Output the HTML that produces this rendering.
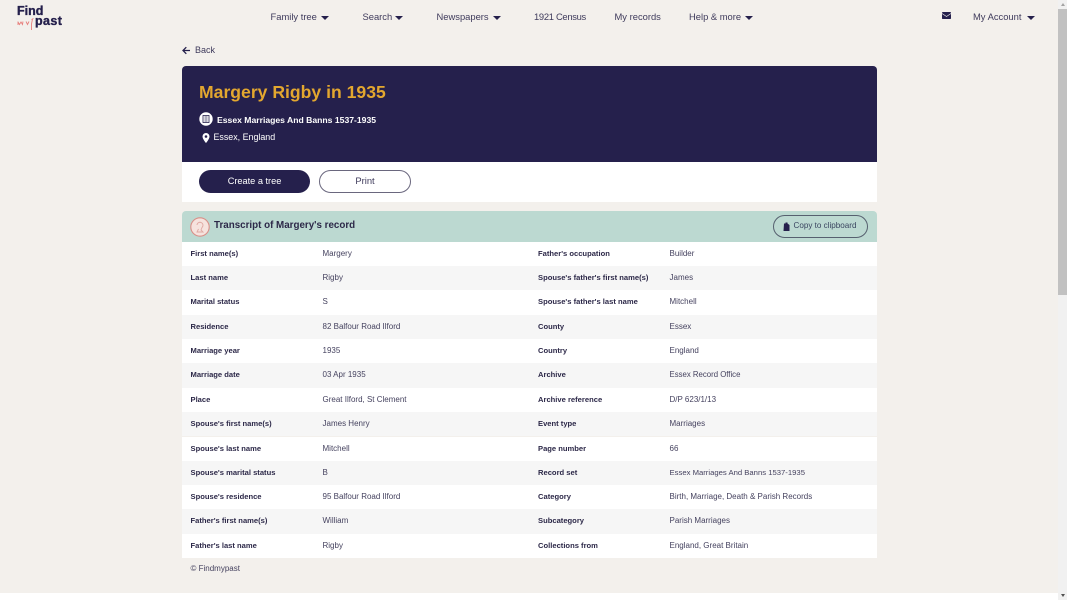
<!DOCTYPE html>
<html><head><meta charset="utf-8"><style>
html,body{margin:0;padding:0;width:1067px;height:600px;overflow:hidden;background:#f3f0ec;font-family:"Liberation Sans",sans-serif;color:#25204c}
.a{position:absolute;white-space:nowrap}
.nav{top:11px;font-size:9.4px;line-height:12px;color:#3f3b5c}
.car{position:absolute;width:0;height:0;border-left:4px solid transparent;border-right:4px solid transparent;border-top:4px solid #25204c}
.row{position:absolute;left:182px;width:695px;height:24.4px}
.row span{position:absolute;top:6px;line-height:11px;white-space:nowrap}
.k{font-size:7.6px;font-weight:bold;color:#2c2848}
.v{font-size:8px;color:#45425f}
.k1{left:8.5px}.v1{left:140.5px}.k2{left:356px}.v2{left:487.5px}
</style></head><body>
<div class="a" style="left:17px;top:5px;font-size:12.5px;line-height:12px;font-weight:bold;color:#25204c;-webkit-text-stroke:.35px #25204c">Find</div>
<div class="a" style="left:35px;top:15px;font-size:12.5px;line-height:12px;font-weight:bold;color:#25204c;letter-spacing:.4px;-webkit-text-stroke:.35px #25204c">past</div>
<svg class="a" style="left:17px;top:18px" width="18" height="13" fill="none" stroke="#e77f7c" stroke-width=".9"><path d="M1 3.500v3.500M1 4l1.500 2.500L4 4l1.500 2.500L6 3.500M9 3.500l1.500 3 1.500-3M14.500 1.500l2-1M15.500 1L14.500 6v6"/></svg>

<div class="a nav" style="left:270.500px">Family tree</div><div class="car" style="left:321px;top:16px"></div>
<div class="a nav" style="left:362.500px">Search</div><div class="car" style="left:395px;top:16px"></div>
<div class="a nav" style="left:436.500px">Newspapers</div><div class="car" style="left:493px;top:16px"></div>
<div class="a nav" style="left:534px;letter-spacing:-.3px">1921 Census</div>
<div class="a nav" style="left:614.500px">My records</div>
<div class="a nav" style="left:689px">Help &amp; more</div><div class="car" style="left:745px;top:16px"></div>
<svg class="a" style="left:942px;top:12px" width="9" height="7"><rect width="9" height="7" rx=".8" fill="#25204c"/><path d="M0 1.500L4.500 4.500L9 1.500" fill="none" stroke="#f3f0ec" stroke-width=".7"/></svg>
<div class="a nav" style="left:973px">My Account</div><div class="car" style="left:1027px;top:16px"></div>

<svg class="a" style="left:182px;top:46px" width="9" height="9" fill="none" stroke="#25204c" stroke-width="1.300"><path d="M8 4.500H1M4.300 1.200L1 4.500l3.300 3.300"/></svg>
<div class="a" style="left:195px;top:44px;font-size:9px;line-height:12px;color:#3f3b5c">Back</div>

<div class="a" style="left:182px;top:66px;width:695px;height:96px;background:#25204c;border-radius:4px 4px 0 0"></div>
<div class="a" style="left:199px;top:81px;font-size:17.600px;line-height:22px;font-weight:bold;color:#e3a72f">Margery Rigby in 1935</div>
<svg class="a" style="left:199px;top:112px" width="14" height="14"><circle cx="7" cy="7" r="6.700" fill="#fff"/><rect x="4" y="3.500" width="6" height="7" fill="none" stroke="#25204c" stroke-width=".8"/><path d="M5.500 5h3M5.500 7h3M5.500 9h3" stroke="#25204c" stroke-width=".7"/></svg>
<div class="a" style="left:217px;top:113.500px;font-size:8.620px;line-height:12px;font-weight:bold;color:#fff">Essex Marriages And Banns 1537-1935</div>
<svg class="a" style="left:202px;top:133px" width="8" height="10"><path fill-rule="evenodd" d="M4 0a3.500 3.500 0 0 1 3.500 3.500C7.500 6 4 10 4 10S.5 6 .5 3.500A3.500 3.500 0 0 1 4 0zm0 2.200a1.300 1.300 0 1 0 0 2.600 1.300 1.300 0 0 0 0-2.600z" fill="#fff"/></svg>
<div class="a" style="left:213.500px;top:131px;font-size:8.900px;line-height:12px;color:#fff">Essex, England</div>

<div class="a" style="left:182px;top:162px;width:695px;height:40px;background:#fff"></div>
<div class="a" style="left:199px;top:170px;width:111px;height:23px;border-radius:12px;background:#25204c;color:#fff;font-size:9.200px;line-height:23px;text-align:center">Create a tree</div>
<div class="a" style="left:319px;top:170px;width:90px;height:21px;border-radius:12px;border:1px solid #6a677e;background:#fff;color:#3f3b5c;font-size:9.400px;line-height:20px;text-align:center">Print</div>

<div class="a" style="left:182px;top:211px;width:695px;height:31px;background:#bcd9d1;border-radius:4px 4px 0 0"></div>
<svg class="a" style="left:190px;top:217px" width="20" height="20" fill="none"><circle cx="10" cy="10" r="9.200" fill="#f6e3de" stroke="#d98f88" stroke-width="1.100"/><path d="M7 8a3 3 0 1 1 5 2.500L11 13l2 2H7l1.500-3" stroke="#dfa8a2" stroke-width=".9"/></svg>
<div class="a" style="left:214px;top:219px;font-size:9.800px;line-height:14px;font-weight:bold;color:#2c2848">Transcript of Margery's record</div>
<div class="a" style="left:773px;top:215px;width:93px;height:21px;border:1px solid #56606f;border-radius:12px"></div>
<svg class="a" style="left:783px;top:222px" width="7" height="9"><path d="M1 1.500h1.500V.5h2v1L6.500 3v6H.5z" fill="#25204c"/></svg>
<div class="a" style="left:793.500px;top:219.500px;font-size:8.100px;line-height:11px;color:#3a4560">Copy to clipboard</div>

<div class="row" style="top:241.500px;background:#fff"><span class="k k1">First name(s)</span><span class="v v1">Margery</span><span class="k k2">Father's occupation</span><span class="v v2">Builder</span></div>
<div class="row" style="top:265.900px;background:#f6f6f6"><span class="k k1">Last name</span><span class="v v1">Rigby</span><span class="k k2">Spouse's father's first name(s)</span><span class="v v2">James</span></div>
<div class="row" style="top:290.200px;background:#fff"><span class="k k1">Marital status</span><span class="v v1">S</span><span class="k k2">Spouse's father's last name</span><span class="v v2">Mitchell</span></div>
<div class="row" style="top:314.600px;background:#f6f6f6"><span class="k k1">Residence</span><span class="v v1">82 Balfour Road Ilford</span><span class="k k2">County</span><span class="v v2">Essex</span></div>
<div class="row" style="top:338.900px;background:#fff"><span class="k k1">Marriage year</span><span class="v v1">1935</span><span class="k k2">Country</span><span class="v v2">England</span></div>
<div class="row" style="top:363.300px;background:#f6f6f6"><span class="k k1">Marriage date</span><span class="v v1">03 Apr 1935</span><span class="k k2">Archive</span><span class="v v2" style="font-size:7.800px">Essex Record Office</span></div>
<div class="row" style="top:387.600px;background:#fff"><span class="k k1">Place</span><span class="v v1">Great Ilford, St Clement</span><span class="k k2">Archive reference</span><span class="v v2">D/P 623/1/13</span></div>
<div class="row" style="top:412px;background:#f6f6f6"><span class="k k1">Spouse's first name(s)</span><span class="v v1">James Henry</span><span class="k k2">Event type</span><span class="v v2">Marriages</span></div>
<div class="row" style="top:436.600px;background:#fff"><span class="k k1">Spouse's last name</span><span class="v v1">Mitchell</span><span class="k k2">Page number</span><span class="v v2">66</span></div>
<div class="row" style="top:460.700px;background:#f6f6f6"><span class="k k1">Spouse's marital status</span><span class="v v1">B</span><span class="k k2">Record set</span><span class="v v2" style="font-size:7.700px">Essex Marriages And Banns 1537-1935</span></div>
<div class="row" style="top:485px;background:#fff"><span class="k k1">Spouse's residence</span><span class="v v1">95 Balfour Road Ilford</span><span class="k k2">Category</span><span class="v v2">Birth, Marriage, Death &amp; Parish Records</span></div>
<div class="row" style="top:509.400px;background:#f6f6f6"><span class="k k1">Father's first name(s)</span><span class="v v1">William</span><span class="k k2">Subcategory</span><span class="v v2">Parish Marriages</span></div>
<div class="row" style="top:533.700px;background:#fff"><span class="k k1">Father's last name</span><span class="v v1">Rigby</span><span class="k k2">Collections from</span><span class="v v2">England, Great Britain</span></div>

<div class="a" style="left:190.500px;top:563px;font-size:8px;line-height:11px;color:#45425f">© Findmypast</div>
<div class="a" style="left:0;top:593px;width:1058px;height:7px;background:#fff"></div>

<div class="a" style="left:1058px;top:0;width:9px;height:600px;background:#f1f1f1"></div>
<div class="a" style="left:1058px;top:9px;width:9px;height:286px;background:#c1c1c1"></div>
<div class="a" style="left:1060.500px;top:3px;width:0;height:0;border-left:2px solid transparent;border-right:2px solid transparent;border-bottom:3px solid #a3a3a3"></div>
<div class="a" style="left:1060.500px;top:594px;width:0;height:0;border-left:2px solid transparent;border-right:2px solid transparent;border-top:3px solid #505050"></div>
</body></html>
